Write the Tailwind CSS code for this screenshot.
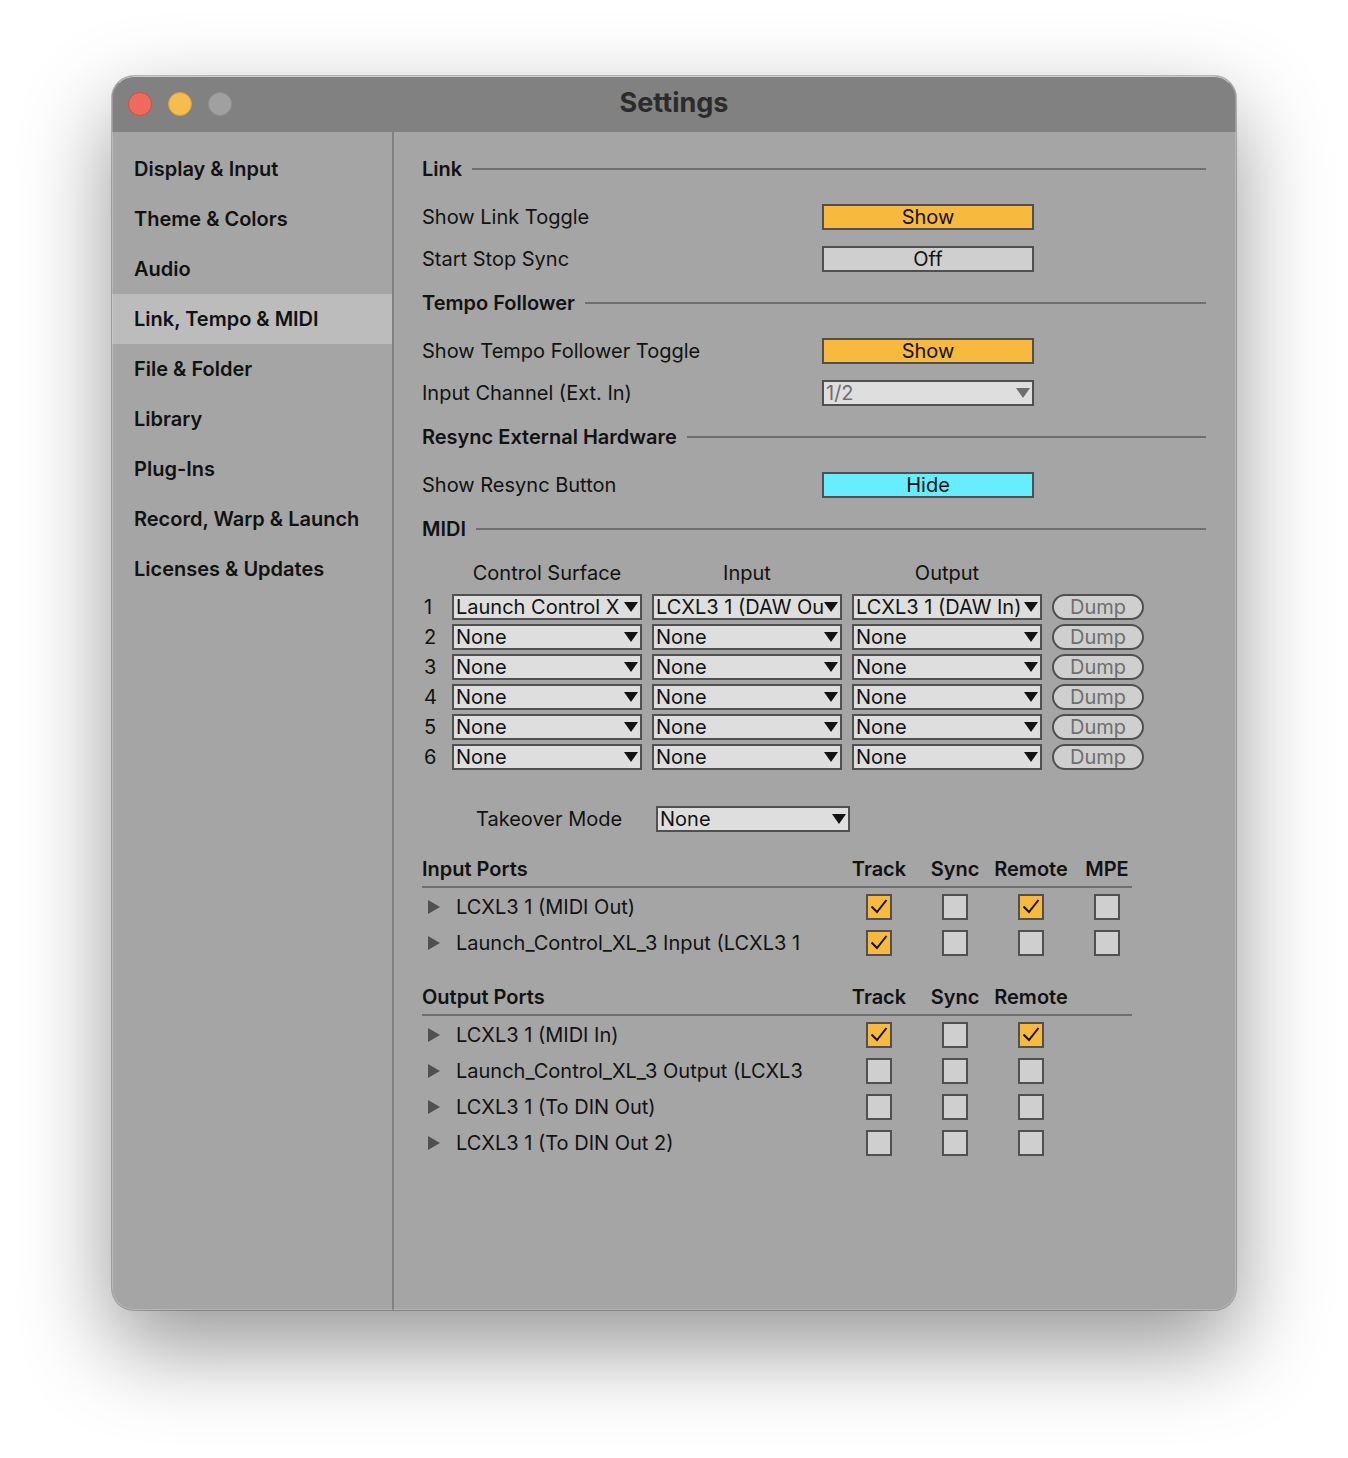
<!DOCTYPE html>
<html lang="en">
<head>
  <meta charset="UTF-8">
  <meta name="viewport" content="width=device-width, initial-scale=1.0">
  <title>Settings</title>
  <script src="https://cdn.jsdelivr.net/npm/@tailwindcss/browser@4"></script>
</head>
<body class="bg-white min-h-screen flex flex-col px-28 pt-[76px] pb-[148px] font-['Inter',sans-serif] text-xl leading-[26px] text-[#121212]">

  <div class="relative flex-1 flex flex-col rounded-[22px] overflow-hidden bg-[#a5a5a5] shadow-[0_0_0_1px_rgba(0,0,0,0.24),0_36px_90px_rgba(0,0,0,0.42)]">

    <!-- Light edge inside the window frame -->
    <div class="absolute inset-0 rounded-[22px] border border-white/20 border-t-white/60 pointer-events-none"></div>

    <!-- Title bar -->
    <header class="h-14 shrink-0 bg-[#818181] grid grid-cols-[1fr_auto_1fr] items-center px-4">
      <div class="flex gap-4">
        <button aria-label="Close" class="size-6 rounded-full bg-[#ee6a5f] border border-[#d0503f]"></button>
        <button aria-label="Minimize" class="size-6 rounded-full bg-[#f5bd4f] border border-[#d69e3c]"></button>
        <button aria-label="Zoom" disabled class="size-6 rounded-full bg-[#a0a0a0] border border-[#8f8f8f]"></button>
      </div>
      <h1 class="pb-0.5 text-[27px] leading-[26px] font-bold text-[#2b2b2b]">Settings</h1>
    </header>

    <div class="flex-1 flex">

      <!-- Pages -->
      <nav class="w-[282px] shrink-0 border-r-2 border-[#818181] pt-3 font-semibold whitespace-nowrap">
        <a href="#" class="block px-[22px] py-3">Display &amp; Input</a>
        <a href="#" class="block px-[22px] py-3">Theme &amp; Colors</a>
        <a href="#" class="block px-[22px] py-3">Audio</a>
        <a href="#" aria-current="page" class="block px-[22px] py-3 bg-[#bcbcbc]">Link, Tempo &amp; MIDI</a>
        <a href="#" class="block px-[22px] py-3">File &amp; Folder</a>
        <a href="#" class="block px-[22px] py-3">Library</a>
        <a href="#" class="block px-[22px] py-3">Plug-Ins</a>
        <a href="#" class="block px-[22px] py-3">Record, Warp &amp; Launch</a>
        <a href="#" class="block px-[22px] py-3">Licenses &amp; Updates</a>
      </nav>

      <main class="flex-1 pl-7 pr-[30px] pt-6">

        <!-- Link -->
        <section class="mb-[18px]">
          <div class="flex items-center gap-[10px] mb-[22px]">
            <h2 class="font-semibold">Link</h2>
            <div class="flex-1 h-0.5 bg-[#6e6e6e]"></div>
          </div>
          <div class="flex flex-col gap-4">
            <div class="flex">
              <label for="link-toggle" class="w-[400px]">Show Link Toggle</label>
              <button id="link-toggle" class="w-[212px] h-[26px] border-2 border-[#505050] bg-[#f7b93e] leading-[22px]">Show</button>
            </div>
            <div class="flex">
              <label for="start-stop" class="w-[400px]">Start Stop Sync</label>
              <button id="start-stop" class="w-[212px] h-[26px] border-2 border-[#505050] bg-[#cfcfcf] leading-[22px]">Off</button>
            </div>
          </div>
        </section>

        <!-- Tempo Follower -->
        <section class="mb-[18px]">
          <div class="flex items-center gap-[10px] mb-[22px]">
            <h2 class="font-semibold">Tempo Follower</h2>
            <div class="flex-1 h-0.5 bg-[#6e6e6e]"></div>
          </div>
          <div class="flex flex-col gap-4">
            <div class="flex">
              <label for="tempo-toggle" class="w-[400px]">Show Tempo Follower Toggle</label>
              <button id="tempo-toggle" class="w-[212px] h-[26px] border-2 border-[#505050] bg-[#f7b93e] leading-[22px]">Show</button>
            </div>
            <div class="flex">
              <label for="input-channel" class="w-[400px]">Input Channel (Ext. In)</label>
              <div class="relative w-[212px]">
                <select id="input-channel" disabled class="block appearance-none w-full h-[26px] border-2 border-[#505050] bg-[#dedede] pl-[2px] pr-4 leading-[22px] text-[#6e6e6e] opacity-100"><option>1/2</option></select>
                <svg class="absolute right-1 top-2 pointer-events-none fill-[#6e6e6e]" width="14" height="10" viewBox="0 0 14 10"><path d="M0 0h14L7 10z"/></svg>
              </div>
            </div>
          </div>
        </section>

        <!-- Resync -->
        <section class="mb-[18px]">
          <div class="flex items-center gap-[10px] mb-[22px]">
            <h2 class="font-semibold">Resync External Hardware</h2>
            <div class="flex-1 h-0.5 bg-[#6e6e6e]"></div>
          </div>
          <div class="flex">
            <label for="resync" class="w-[400px]">Show Resync Button</label>
            <button id="resync" class="w-[212px] h-[26px] border-2 border-[#505050] bg-[#68ecff] leading-[22px]">Hide</button>
          </div>
        </section>

        <!-- MIDI -->
        <section>
          <div class="flex items-center gap-[10px] mb-[18px]">
            <h2 class="font-semibold">MIDI</h2>
            <div class="flex-1 h-0.5 bg-[#6e6e6e]"></div>
          </div>

          <table class="table-fixed w-[722px]">
            <thead>
              <tr>
                <th class="w-5 p-0"></th>
                <th class="w-[200px] pl-[10px] pb-2 pt-0 font-normal">Control Surface</th>
                <th class="w-[200px] pl-[10px] pb-2 pt-0 font-normal">Input</th>
                <th class="w-[200px] pl-[10px] pb-2 pt-0 font-normal">Output</th>
                <th class="w-[102px] p-0"></th>
              </tr>
            </thead>
            <tbody id="surfaces"></tbody>
          </table>

          <div class="flex mt-8 pl-[54px]">
            <label for="takeover" class="w-[180px]">Takeover Mode</label>
            <div class="relative w-[194px]">
              <select id="takeover" class="block appearance-none w-full h-[26px] border-2 border-[#505050] bg-[#dedede] pl-[2px] pr-4 leading-[22px]"><option>None</option></select>
              <svg class="absolute right-1 top-2 pointer-events-none fill-[#121212]" width="14" height="10" viewBox="0 0 14 10"><path d="M0 0h14L7 10z"/></svg>
            </div>
          </div>

          <table class="table-fixed w-[710px] mt-6">
            <thead>
              <tr class="border-b-2 border-[#6e6e6e]">
                <th class="p-0 pb-1 text-left font-semibold">Input Ports</th>
                <th class="w-[76px] p-0 pb-1 font-semibold">Track</th>
                <th class="w-[76px] p-0 pb-1 font-semibold">Sync</th>
                <th class="w-[76px] p-0 pb-1 font-semibold">Remote</th>
                <th class="w-[63px] p-0 pb-1 pl-[13px] font-semibold">MPE</th>
              </tr>
            </thead>
            <tbody id="input-ports"></tbody>
          </table>

          <table class="table-fixed w-[710px] mt-7">
            <thead>
              <tr class="border-b-2 border-[#6e6e6e]">
                <th class="p-0 pb-1 text-left font-semibold">Output Ports</th>
                <th class="w-[76px] p-0 pb-1 font-semibold">Track</th>
                <th class="w-[76px] p-0 pb-1 font-semibold">Sync</th>
                <th class="w-[76px] p-0 pb-1 font-semibold">Remote</th>
                <th class="w-[63px] p-0"></th>
              </tr>
            </thead>
            <tbody id="output-ports"></tbody>
          </table>
        </section>

      </main>
    </div>
  </div>

  <script>
    const surfaces = [
      ['Launch Control X', 'LCXL3 1 (DAW Ou', 'LCXL3 1 (DAW In)'],
      ['None', 'None', 'None'],
      ['None', 'None', 'None'],
      ['None', 'None', 'None'],
      ['None', 'None', 'None'],
      ['None', 'None', 'None']
    ];

    // 1 = on, 0 = off, in column order
    const inputPorts = [
      ['LCXL3 1 (MIDI Out)', [1, 0, 1, 0]],
      ['Launch_Control_XL_3 Input (LCXL3 1', [1, 0, 0, 0]]
    ];
    const outputPorts = [
      ['LCXL3 1 (MIDI In)', [1, 0, 1]],
      ['Launch_Control_XL_3 Output (LCXL3', [0, 0, 0]],
      ['LCXL3 1 (To DIN Out)', [0, 0, 0]],
      ['LCXL3 1 (To DIN Out 2)', [0, 0, 0]]
    ];

    const surfaceColumns = ['Control Surface', 'Input', 'Output'];
    const portColumns = ['Track', 'Sync', 'Remote', 'MPE'];

    document.getElementById('surfaces').innerHTML = surfaces.map((row, i) => `
      <tr>
        <td class="p-0 pb-1 pl-0.5">${i + 1}</td>
        ${row.map((value, col) => `
          <td class="p-0 pb-1 pl-[10px]">
            <div class="relative">
              <select aria-label="${surfaceColumns[col]} ${i + 1}" class="block appearance-none w-full h-[26px] border-2 border-[#505050] bg-[#dedede] pl-[2px] pr-4 leading-[22px]"><option>${value}</option></select>
              <svg class="absolute right-1 top-2 pointer-events-none fill-[#121212]" width="14" height="10" viewBox="0 0 14 10"><path d="M0 0h14L7 10z"/></svg>
            </div>
          </td>`).join('')}
        <td class="p-0 pb-1 pl-[10px]">
          <button disabled class="block w-full h-[26px] rounded-full border-2 border-[#505050] bg-[#cfcfcf] leading-[22px] text-[#6e6e6e]">Dump</button>
        </td>
      </tr>`).join('');

    function portRows(ports) {
      return ports.map(([name, flags], i) => `
        <tr>
          <td class="p-0 ${i ? 'pt-[10px]' : 'pt-1.5'}">
            <div class="flex items-center pl-1.5 whitespace-nowrap">
              <button aria-label="Expand ${name}" class="w-7">
                <svg class="fill-[#505050]" width="12" height="14" viewBox="0 0 12 14"><path d="M0 0l12 7-12 7z"/></svg>
              </button>
              <span>${name}</span>
            </div>
          </td>
          ${flags.map((on, col) => `
            <td class="p-0 ${i ? 'pt-[10px]' : 'pt-1.5'} ${col === 3 ? 'pl-[13px]' : ''}">
              <div class="relative size-[26px] mx-auto">
                <input type="checkbox" aria-label="${name} ${portColumns[col]}" ${on ? 'checked' : ''} class="peer block appearance-none size-[26px] border-2 border-[#505050] bg-[#cfcfcf] checked:bg-[#f7b93e]">
                <svg class="absolute inset-0 pointer-events-none hidden peer-checked:block" width="26" height="26" viewBox="0 0 26 26" fill="none" stroke="#121212" stroke-width="2"><path d="M5.500 12.500l5.500 5.500L20.500 6"/></svg>
              </div>
            </td>`).join('')}
        </tr>`).join('');
    }

    document.getElementById('input-ports').innerHTML = portRows(inputPorts);
    document.getElementById('output-ports').innerHTML = portRows(outputPorts);
  </script>
</body>
</html>
